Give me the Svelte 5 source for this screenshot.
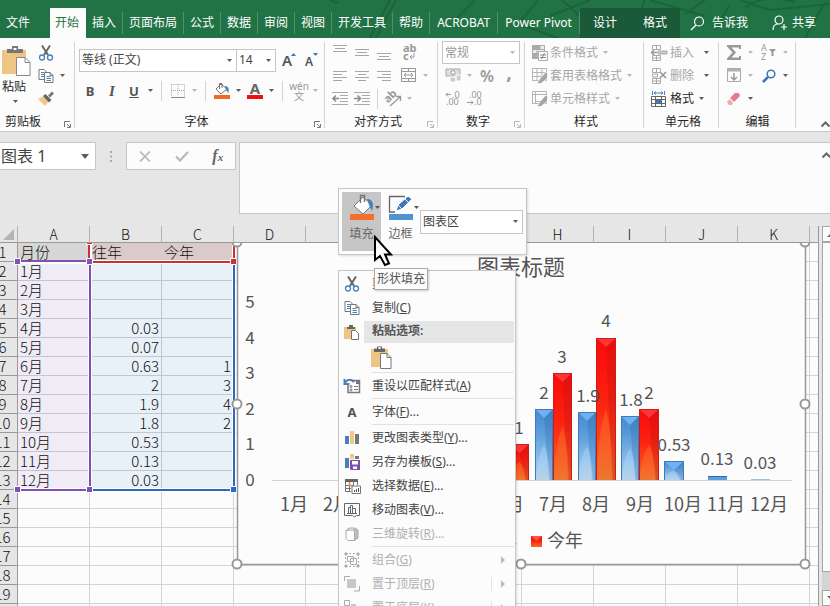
<script>
  const tabs = ['插入', '页面布局', '公式', '数据', '审阅', '视图', '开发工具', '帮助', 'ACROBAT', 'Power Pivot'];
  const columns = ['A', 'B', 'C', 'D', 'E', 'F', 'G', 'H', 'I', 'J', 'K', 'L'];
  const data = [
    ['月份', '往年', '今年'],
    ['1月', '', ''], ['2月', '', ''], ['3月', '', ''],
    ['4月', '0.03', ''], ['5月', '0.07', ''], ['6月', '0.63', '1'],
    ['7月', '2', '3'], ['8月', '1.9', '4'], ['9月', '1.8', '2'],
    ['10月', '0.53', ''], ['11月', '0.13', ''], ['12月', '0.03', '']
  ];
  const rows = Array.from({ length: 20 }, (_, i) => data[i] ?? ['', '', '']);
  const menu = [
    { icon: 'cut', text: '剪切', key: 'T', tail: '' },
    { icon: 'copy', text: '复制', key: 'C', tail: '' },
    { heading: '粘贴选项:' },
    { sep: true },
    { icon: 'reset', text: '重设以匹配样式', key: 'A', tail: '' },
    { sep: true },
    { icon: 'letter', text: '字体', key: 'F', tail: '...' },
    { sep: true },
    { icon: 'chart', text: '更改图表类型', key: 'Y', tail: '...' },
    { icon: 'template', text: '另存为模板', key: 'S', tail: '...' },
    { icon: 'select', text: '选择数据', key: 'E', tail: '...' },
    { icon: 'move', text: '移动图表', key: 'V', tail: '...' },
    { icon: 'cube', text: '三维旋转', key: 'R', tail: '...', off: true },
    { sep: true },
    { icon: 'group', text: '组合', key: 'G', tail: '', off: true, sub: true },
    { icon: 'front', text: '置于顶层', key: 'R', tail: '', off: true, sub: true, split: true },
    { icon: 'back', text: '置于底层', key: 'K', tail: '', off: true, sub: true, split: true }
  ];
  const bars = [
    { x: 492, w: 18, top: 457, c: 'blue' }, { x: 510, w: 19, top: 444, c: 'red' },
    { x: 535, w: 18, top: 409, c: 'blue' }, { x: 553, w: 19, top: 373, c: 'red' },
    { x: 578, w: 18, top: 412, c: 'blue' }, { x: 596, w: 20, top: 338, c: 'red' },
    { x: 621, w: 18, top: 416, c: 'blue' }, { x: 639, w: 20, top: 409, c: 'red' },
    { x: 664, w: 20, top: 461, c: 'blue' }
  ];
  const labels = [
    [519, 434, '1'], [544, 399, '2'], [562, 363, '3'], [588, 402, '1.9'], [606, 327, '4'],
    [631, 406, '1.8'], [649, 399, '2'], [674, 451, '0.53'], [717, 465, '0.13'], [760, 469, '0.03']
  ];
  const handles = [[237, 242], [521, 242], [805, 242], [237, 404], [805, 404], [237, 564], [521, 564], [805, 564]];
</script>

{#snippet caret(off = false)}
  <svg class="caret" width="5" height="3" viewBox="0 0 5 3"><path d="M0 0h5L2.5 3z" fill={off ? '#b8b8b8' : '#5c5c5c'} /></svg>
{/snippet}

{#snippet launcher(off = false)}
  <button class="launcher" aria-label="更多">
    <svg width="7" height="7" viewBox="0 0 7 7" fill="none" stroke={off ? '#b8b8b8' : '#777'}><path d="M.5 6V.5H6M3 3l3 3M6.500 3v3.500H3" /></svg>
  </button>
{/snippet}

{#snippet icon(name)}
  {#if name === 'cut'}
    <svg width="16" height="16" viewBox="0 0 16 16" fill="none"><path d="M4 0.500 L10 10M12 0.500 L6 10" stroke="#666" stroke-width="2" /><circle cx="4" cy="12.500" r="2.500" stroke="#4a7fb8" stroke-width="1.300" /><circle cx="12" cy="12.500" r="2.500" stroke="#4a7fb8" stroke-width="1.300" /></svg>
  {:else if name === 'copy'}
    <svg width="16" height="16" viewBox="0 0 16 16" fill="#fff" stroke="#777"><path d="M1 1.500h5l3 3v7H1z" /><path d="M3 4.500h3M3 6.500h3M3 8.500h3" stroke="#4a7fb8" /><path d="M6.500 4.500h5.500l3 3v7H6.500z" /><path d="M12 4.500v3h3" fill="none" /><path d="M8.500 8.500h4M8.500 10.500h4.500M8.500 12.500h4.500" stroke="#4a7fb8" /></svg>
  {:else if name === 'brush'}
    <svg width="18" height="16" viewBox="0 0 18 16"><path d="M1 8l6-3 5 5-4 5z" fill="#f0c88c" /><path d="M6 5l2.500-2 6 6L12 11.500z" fill="#666" /><path d="M11 4.500L15 .5l2 2-4 4z" fill="#777" /></svg>
  {:else if name === 'clipboard'}
    <svg width="22" height="24" viewBox="0 0 22 24"><path d="M1 4h17v18H1z" fill="#eec583" /><path d="M4 3.500h3v-2h5v2h3V7H4z" fill="#666" /><path d="M8.500 2h2v2h-2z" fill="#fff" /><path d="M10.500 8.500H17l4 4v11H10.500z" fill="#fff" stroke="#777" /><path d="M17 8.500v4h4" fill="none" stroke="#777" /></svg>
  {:else if name === 'reset'}
    <svg width="18" height="16" viewBox="0 0 18 16" fill="none"><path d="M9 2.500h7.500v12H5V7" stroke="#777" stroke-width="1.500" /><path d="M13 3h3v3h-3z" fill="#777" /><path d="M2 5c2-4 6-4 9-1M1.500 1v5h5" stroke="#4a7fb8" stroke-width="2" /><path d="M11 8.500h4M11 11.500h4" stroke="#777" /><circle cx="8" cy="8.500" r="1" stroke="#777" /><circle cx="8" cy="12" r="1" stroke="#777" /></svg>
  {:else if name === 'letter'}
    <b class="glyph">A</b>
  {:else if name === 'chart'}
    <svg width="16" height="16" viewBox="0 0 16 16"><path d="M1 6h4v8H1z" fill="#4a7fb8" /><path d="M6 1h4v13H6z" fill="#f0c88c" /><path d="M11 4h4v10h-4z" fill="#777" /></svg>
  {:else if name === 'template'}
    <svg width="16" height="16" viewBox="0 0 16 16"><path d="M1 4h4v10H1z" fill="#4a7fb8" /><path d="M6 0h4v5H6z" fill="#f0c88c" /><path d="M11 2h4v3h-4z" fill="#777" /><path d="M6 6h10v10H7l-1-1z" fill="#7b4fb0" /><path d="M8 7h6v3.500H8zM9 12.500h4v2.500H9z" fill="#fff" /></svg>
  {:else if name === 'select'}
    <svg width="17" height="16" viewBox="0 0 17 16" fill="none"><path d="M1 1h13v3H1z" fill="#666" /><path d="M1.500 4v9.500H7M5.500 4v9M9.500 4v3M13.500 4v3M1.500 7.500h8M1.500 10.500H7" stroke="#777" /><path d="M5.500 4v3.500h4" stroke="#ee8640" stroke-width="1.500" /><path d="M8 8h8.500v7.500H8z" fill="#fff" stroke="#777" /><path d="M10.500 14v-2M12.500 14V11M14.500 14v-4" stroke="#555" /></svg>
  {:else if name === 'move'}
    <svg width="16" height="16" viewBox="0 0 16 16" fill="none" stroke="#666"><path d="M.5 1.500h15v12h-3l-2 1.500-2-1.500h-8z" /><path d="M4.500 11.500v-6h2v6zM6.500 11.500V3.500h2v8zM8.500 11.500v-5h3v5zM3 11.500h10" /></svg>
  {:else if name === 'cube'}
    <svg width="16" height="16" viewBox="0 0 16 16" fill="none" stroke="#aaa"><path d="M2 4.500h8.500v10H4l-2-2z" fill="#fff" /><path d="M2 4.500L5 2h6l3 2v8l-3.500 2.500V4.500z" fill="#bdbdbd" /><path d="M3 4.500L6 2.500h4l-1 2z" fill="#ddd" stroke="none" /></svg>
  {:else if name === 'group'}
    <svg width="16" height="16" viewBox="0 0 16 16" fill="none" stroke="#aaa"><path d="M1 1h2v2H1zM13 1h2v2h-2zM1 13h2v2H1zM13 13h2v2h-2z" fill="#aaa" /><path d="M3.500 4.500h6v5h-6zM6.500 6.500h6v6h-6z" /><path d="M5 1.500h2M9 1.500h2M5 14.500h2M9 14.500h2M1.500 5v2M1.500 9v2M14.500 5v2M14.500 9v2" /></svg>
  {:else if name === 'front'}
    <svg width="16" height="16" viewBox="0 0 16 16" fill="none" stroke="#aaa"><path d="M.5 5V.5H6M15.500 10v5H10" /><path d="M3 3h9v9H3z" fill="#c8c8c8" stroke="none" /></svg>
  {:else if name === 'back'}
    <svg width="16" height="16" viewBox="0 0 16 16" fill="none" stroke="#aaa"><path d="M.5.5h5v5h-5zM10.500 10.500h5v5h-5z" /><path d="M7 4h5v6H7z" fill="#c8c8c8" stroke="none" /></svg>
  {:else if name === 'bucket'}
    <svg width="18" height="18" viewBox="0 0 18 18"><path d="M3 7l5-5 6 5-6 5z" fill="#fff" stroke="#777" /><path d="M6.500 7V1.500h2.500V6" fill="none" stroke="#777" /><path d="M12 4c4 0 4 4 3.500 7L13 8z" fill="#4a7fb8" /><path d="M1 13h16v4H1z" fill="#f0692a" /></svg>
  {:else if name === 'fontcolor'}
    <svg width="18" height="18" viewBox="0 0 18 18"><path d="M1 13h16v4H1z" fill="#f01010" /><text x="9" y="12" font-size="15" font-weight="700" fill="#666" text-anchor="middle">A</text></svg>
  {:else if name === 'borders'}
    <svg width="14" height="14" viewBox="0 0 14 14" fill="none" stroke="#aaa"><path d="M.5.5h13v12M.5.5v12M7 0v12M0 6.500h14" stroke-dasharray="1 1" /><path d="M0 13.500h14" stroke="#888" /></svg>
  {:else if name === 'merge'}
    <svg width="16" height="15" viewBox="0 0 16 15" fill="none" stroke="#999"><path d="M.5.5h14v13H.5zM.5 3.500h14M.5 10.500h14M7.500 0v4M7.500 11v3M3 7h9M5 5l-2 2 2 2M10 5l2 2-2 2" /></svg>
  {:else if name === 'wrap'}
    <svg width="14" height="18" viewBox="0 0 14 18"><text x="1" y="8" font-size="11" font-weight="700" fill="#999">ab</text><text x="1" y="16" font-size="11" font-weight="700" fill="#999">c</text><path d="M12 9v4H8M10 11l-2 2 2 2" fill="none" stroke="#999" /></svg>
  {:else if name === 'outdent' || name === 'indent'}
    <svg width="16" height="14" viewBox="0 0 16 14" fill="none" stroke="#aaa"><path d="M0 .5h16M8 3.500h8M8 6.500h8M8 9.500h8M0 12.500h16" /><path d={name === 'indent' ? 'M0 6.500h6M3.500 3.500l3 3-3 3' : 'M1 6.500h6M4 3.500l-3 3 3 3'} stroke="#888" stroke-width="1.500" /></svg>
  {:else if name === 'orient'}
    <svg width="17" height="16" viewBox="0 0 17 16"><text x="1" y="10" font-size="11" font-weight="700" fill="#999" transform="rotate(-45 5 9)">ab</text><path d="M5 15L15 6M11 5.500h4.500V10" fill="none" stroke="#999" stroke-width="1.300" /></svg>
  {:else if name === 'money'}
    <svg width="17" height="15" viewBox="0 0 17 15"><path d="M1 1h14v7H1z" fill="#ddd" stroke="#aaa" /><circle cx="8" cy="4.500" r="2" fill="#fff" stroke="#999" /><path d="M5 9h6v5H5zM11 7h5v6h-5z" fill="#ccc" stroke="#fff" /></svg>
  {:else if name === 'incdec' || name === 'decdec'}
    <svg width="16" height="15" viewBox="0 0 16 15" font-size="9" fill="#999"><text x={name === 'incdec' ? 7 : 2} y="7">{name === 'incdec' ? '.0' : '.00'}</text><text x={name === 'incdec' ? 1 : 7} y="14">{name === 'incdec' ? '.00' : '.0'}</text><path d={name === 'incdec' ? 'M1 3.500h5M3 1.500l-2 2 2 2' : 'M0 11.500h6M4 9.500l2 2-2 2'} fill="none" stroke="#999" /></svg>
  {:else if name === 'cond'}
    <svg width="16" height="16" viewBox="0 0 16 16" fill="#eee" stroke="#aaa"><path d="M.5.500h12v13H.5zM.5 4.500h12M.5 8.500h12M5 .5v13" /><path d="M1 1h7v3H1zM1 9h4v4H1z" fill="#aaa" /><path d="M6.500 6.500h9v9h-9z" fill="#fff" /><path d="M8 10h6M8 12.500h6M12.500 8l-3 6" stroke="#888" /></svg>
  {:else if name === 'tablefmt' || name === 'cellfmt'}
    <svg width="16" height="16" viewBox="0 0 16 16" fill="none" stroke="#b4b4b4"><path d="M.5.5h14v12H.5z" /><path d={name === 'tablefmt' ? 'M.5 4.500h14M.5 8.500h14M5 0v13M10 0v13' : 'M.5 3.500h14M3.500 0v13M3.500 10.500h8'} /><path d="M5 15.500l3-5 6-6.500 1.500 1v5L9 15.500z" fill="#a4a4a4" stroke="#fff" stroke-width=".7" /></svg>
  {:else if name === 'insert' || name === 'delete'}
    <svg width="17" height="16" viewBox="0 0 17 16" fill="none" stroke="#aaa"><path d="M1.500.5h8v4h-8zM5.500.5v4M1.500 10.500h8v5h-8zM5.500 10.500v5M1.500 13h8" />{#if name === 'insert'}<path d="M7 6h9v3H7z" fill="#ccc" /><path d="M0 7.500h6M3 5l-2.500 2.500L3 10" stroke="#999" stroke-width="1.500" />{:else}<path d="M1.500 6h5v3h-5z" /><path d="M9 4l6 6M15 4l-6 6" stroke="#999" stroke-width="1.700" />{/if}</svg>
  {:else if name === 'format'}
    <svg width="17" height="16" viewBox="0 0 17 16" fill="none"><path d="M1.500 0v4M13.500 0v4M3 2h9M5 .5L3 2l2 1.500M10 .5L12 2l-2 1.500" stroke="#4a7fb8" /><path d="M.5 5.500h14v10H.5zM.5 8.500h14M.5 12.500h14M4.500 5.500v10M10.500 5.500v10" stroke="#666" /><path d="M5 9h5v3H5z" fill="#3f78bb" /></svg>
  {:else if name === 'sum'}
    <svg width="15" height="15" viewBox="0 0 15 15"><path d="M0 0h14v4h-2V2.500H4.500L9 7.500 4.500 12.500H12V11h2v4H0v-1.500L5.500 7.500 0 1.500z" fill="#999" /></svg>
  {:else if name === 'sort'}
    <svg width="16" height="17" viewBox="0 0 16 17"><text x="0" y="7" font-size="9" fill="#999">A</text><text x="0" y="16" font-size="9" fill="#999">Z</text><path d="M8 5h7l-2.500 3v4h-2V8z" fill="#999" /></svg>
  {:else if name === 'filldown'}
    <svg width="15" height="15" viewBox="0 0 15 15" fill="none" stroke="#aaa"><path d="M.5.5h13v13H.5z" /><path d="M1 1h12v2H1z" fill="#bbb" /><path d="M7 5v7M4 9l3 3 3-3" stroke="#999" stroke-width="1.500" /></svg>
  {:else if name === 'find'}
    <svg width="15" height="14" viewBox="0 0 15 14" fill="none" stroke="#3f73b5"><circle cx="9" cy="5" r="3.800" stroke-width="1.500" /><path d="M6 8l-5 5" stroke-width="2.500" /></svg>
  {:else if name === 'eraser'}
    <svg width="14" height="14" viewBox="0 0 14 14"><path d="M8 1h4l1 3-6 6-4-4z" fill="#e57a90" /><path d="M2.500 7l3.500 4-1.500 2H2l-2-3z" fill="#f0a5b2" /></svg>
  {/if}
{/snippet}

{#snippet lines(list)}
  <button class="tool" aria-label="对齐">
    <svg width="15" height="16" viewBox="0 0 15 16" stroke="#a6a6a6">
      {#each list as [x1, x2, y]}<path d="M{x1} {y}.5H{x2}" />{/each}
    </svg>
  </button>
{/snippet}

{#snippet tool(name, label)}
  <button class="tool" aria-label={label}>{@render icon(name)}</button>
{/snippet}

<div class="app">
  <header>
    <svg class="deco" width="530" height="38" viewBox="0 0 530 38" fill="none" stroke="#1c633c" stroke-width="2" aria-hidden="true">
      <path d="M30 0l8 3M70 38L90 0M76 38L96 0M155 20L175 0M238 0l-20 24 40 14M262 0l22 20 6 18M310 24l18 14M250 16l40-16M345 0l-8 20M385 14l20-14M445 8c12-10 30-12 50-6M440 0l30 10 60-6M415 30l14-24M505 38l20-36M350 0l55 16" />
    </svg>
    <nav>
      <a href="#file" class="file">文件</a>
      <a href="#home" class="active">开始</a>
      {#each tabs as t}<a href="#tab" class="tab" class:latin={t > 'A' && t < 'Z'}><span>{t}</span></a>{/each}
      <a href="#design" class="ctx">设计</a>
      <a href="#format" class="ctx">格式</a>
    </nav>
    <button class="tell">
      <svg width="15" height="15" viewBox="0 0 15 15" fill="none" stroke="#fff" stroke-width="1.200"><circle cx="9" cy="5.500" r="4.500" /><path d="M6 9l-5 5" /></svg>
      <span>告诉我</span>
    </button>
    <button class="share">
      <svg width="16" height="16" viewBox="0 0 16 16" fill="none" stroke="#fff" stroke-width="1.200"><circle cx="7" cy="5" r="4" /><path d="M1 15c0-4 2-6 5-6M12 9v6M9 12h6" /></svg>
      <span>共享</span>
    </button>
  </header>

  <section class="ribbon">
    <div class="group clip">
      <div class="body cols">
        <button class="paste">
          <svg width="30" height="32" viewBox="0 0 30 32"><path d="M1 5h24v24H1z" fill="#eec583" /><path d="M6 4h5V1h6v3h5v4H6z" fill="#777" /><path d="M12.500 3h3v2h-3z" fill="#fff" /><path d="M15.500 12.500H24l5 5v13H15.500z" fill="#fff" stroke="#888" /><path d="M24 12.500v5h5" fill="none" stroke="#888" /></svg>
          <span>粘贴</span>
          {@render caret()}
        </button>
        <div class="stack">
          <div class="row">{@render tool('cut', '剪切')}</div>
          <div class="row">{@render tool('copy', '复制')}{@render caret()}</div>
          <div class="row">{@render tool('brush', '格式刷')}</div>
        </div>
      </div>
      <footer><span>剪贴板</span>{@render launcher()}</footer>
    </div>

    <div class="group font">
      <div class="body">
        <div class="row tall">
          <label class="sel wide"><select aria-label="字体"><option>等线 (正文)</option></select>{@render caret()}</label>
          <label class="sel size"><select aria-label="字号"><option>14</option></select>{@render caret()}</label>
          <button class="tool" aria-label="增大字号"><svg width="16" height="18" viewBox="0 0 16 18"><text x="2" y="15" font-size="15" font-weight="600" fill="#555">A</text><path d="M11 5h5l-2.500-3z" fill="#3f73b5" /></svg></button>
          <button class="tool" aria-label="减小字号"><svg width="16" height="18" viewBox="0 0 16 18"><text x="2" y="15" font-size="12" font-weight="600" fill="#555">A</text><path d="M10 2h5l-2.500 3z" fill="#3f73b5" /></svg></button>
        </div>
        <div class="row fmt">
          <button class="tool"><b>B</b></button>
          <button class="tool"><i>I</i></button>
          <button class="tool"><u>U</u></button>
          {@render caret()}<span class="bar"></span>
          {@render tool('borders', '边框')}{@render caret(true)}<span class="bar"></span>
          {@render tool('bucket', '填充颜色')}{@render caret()}
          <span class="gap"></span>
          {@render tool('fontcolor', '字体颜色')}{@render caret()}<span class="bar"></span>
          <button class="pinyin"><span>wén</span><span>文</span></button>{@render caret(true)}
        </div>
      </div>
      <footer><span>字体</span>{@render launcher()}</footer>
    </div>

    <div class="group align">
      <div class="body">
        <div class="row">
          {@render lines([[0, 14, 0], [2, 12, 3], [0, 14, 6]])}
          {@render lines([[0, 14, 4], [2, 12, 7], [0, 14, 10]])}
          {@render lines([[0, 14, 8], [2, 12, 11], [0, 14, 14]])}
          <span class="gap"></span>{@render tool('wrap', '自动换行')}
        </div>
        <div class="row">
          {@render lines([[0, 14, 3], [0, 9, 6], [0, 14, 9], [0, 9, 12]])}
          {@render lines([[0, 14, 3], [3, 11, 6], [0, 14, 9], [3, 11, 12]])}
          {@render lines([[0, 14, 3], [5, 14, 6], [0, 14, 9], [5, 14, 12]])}
          <span class="gap"></span>{@render tool('merge', '合并')}{@render caret(true)}
        </div>
        <div class="row">
          {@render tool('outdent', '减少缩进')}{@render tool('indent', '增加缩进')}
          <span class="bar"></span>{@render tool('orient', '方向')}{@render caret(true)}
        </div>
      </div>
      <footer><span>对齐方式</span>{@render launcher(true)}</footer>
    </div>

    <div class="group number">
      <div class="body">
        <div class="row"><label class="sel num"><select aria-label="数字格式"><option>常规</option></select>{@render caret(true)}</label></div>
        <div class="row">
          {@render tool('money', '会计格式')}{@render caret(true)}
          <button class="tool pct">%</button><button class="tool comma">,</button>
        </div>
        <div class="row">{@render tool('incdec', '增加小数位')}{@render tool('decdec', '减少小数位')}</div>
      </div>
      <footer><span>数字</span>{@render launcher(true)}</footer>
    </div>

    <div class="group styles">
      <div class="body">
        <button class="row text off">{@render icon('cond')}<span>条件格式</span>{@render caret(true)}</button>
        <button class="row text off">{@render icon('tablefmt')}<span>套用表格格式</span>{@render caret(true)}</button>
        <button class="row text off">{@render icon('cellfmt')}<span>单元格样式</span>{@render caret(true)}</button>
      </div>
      <footer><span>样式</span></footer>
    </div>

    <div class="group cells">
      <div class="body">
        <button class="row text off apart">{@render icon('insert')}<span>插入</span>{@render caret()}</button>
        <button class="row text off apart">{@render icon('delete')}<span>删除</span>{@render caret()}</button>
        <button class="row text">{@render icon('format')}<span>格式</span>{@render caret()}</button>
      </div>
      <footer><span>单元格</span></footer>
    </div>

    <div class="group edit">
      <div class="body">
        <div class="row">{@render tool('sum', '求和')}{@render caret(true)}<span class="gap"></span>{@render tool('sort', '排序')}{@render caret(true)}</div>
        <div class="row">{@render tool('filldown', '填充')}{@render caret(true)}<span class="gap"></span>{@render tool('find', '查找')}{@render caret()}</div>
        <div class="row">{@render tool('eraser', '清除')}{@render caret()}</div>
      </div>
      <footer><span>编辑</span></footer>
    </div>

    <button class="fold" aria-label="折叠功能区"><svg width="9" height="6" viewBox="0 0 9 6" fill="none" stroke="#666" stroke-width="2"><path d="M.5 5.500l4-4 4 4" /></svg></button>
  </section>

  <section class="formula">
    <label class="sel name"><select aria-label="名称框"><option>图表 1</option></select>{@render caret()}</label>
    <svg class="dots" width="2" height="11" viewBox="0 0 2 11" fill="#aaa"><path d="M0 0h2v2H0zM0 4.500h2v2H0zM0 9h2v2H0z" /></svg>
    <div class="fx">
      <button aria-label="取消"><svg width="12" height="11" viewBox="0 0 12 11" stroke="#b8b8b8" stroke-width="1.700"><path d="M1 .5l10 10M11 .5l-10 10" /></svg></button>
      <button aria-label="输入"><svg width="14" height="11" viewBox="0 0 14 11" fill="none" stroke="#b8b8b8" stroke-width="2.200"><path d="M1 5.500l4 4L13 1" /></svg></button>
      <button class="fn"><i>f</i><small>x</small></button>
    </div>
    <div class="entry">
      <textarea aria-label="编辑栏"></textarea>
      <button aria-label="折叠编辑栏"><svg width="9" height="6" viewBox="0 0 9 6" fill="none" stroke="#666" stroke-width="2"><path d="M.5 5.500l4-4 4 4" /></svg></button>
    </div>
  </section>

  <main>
    <div class="sheet">
      <table>
        <thead>
          <tr>
            <th class="corner"><svg width="11" height="11" viewBox="0 0 11 11"><path d="M11 0v11H0z" fill="#b4b4b4" /></svg></th>
            {#each columns as c}<th>{c}</th>{/each}
          </tr>
        </thead>
        <tbody>
          {#each rows as r, i}
            <tr class:first={i === 0} class:filled={i > 0 && i < 13}>
              <th>{i + 1}</th>
              {#each columns as _, j}<td class:value={i > 0 && j > 0}>{r[j] ?? ''}</td>{/each}
            </tr>
          {/each}
        </tbody>
      </table>

      <svg class="ranges" width="240" height="252" viewBox="0 243 240 252" fill="none" aria-hidden="true">
        <g stroke="#fff" stroke-width="4"><path d="M90 243V489M234 243V489M18 490H234M18 262H234" /></g>
        <g stroke-width="2">
          <path d="M89 243v18M234 243v18M90 262H234" stroke="#c83232" />
          <path d="M17 261H89M90 262V489M17 490H89" stroke="#8050b4" />
          <path d="M234 263V489M92 490H233" stroke="#2f68c4" />
        </g>
        <g stroke="#fff">
          <path d="M14.500 258.500h6v6h-6zM86.500 258.500h6v6h-6zM86.500 486.500h6v6h-6zM14.500 486.500h6v6h-6z" fill="#8050b4" />
          <path d="M230.500 258.500h6v6h-6zM86.500 238.500h6v6h-6z" fill="#c83232" />
          <path d="M230.500 486.500h6v6h-6z" fill="#2f68c4" />
        </g>
      </svg>

      <svg class="chart" width="585" height="330" viewBox="229 243 585 330" role="img" aria-label="图表标题">
        <defs>
          <linearGradient id="blue" x1="0" y1="0" x2="0" y2="1"><stop offset="0" stop-color="#438ace" /><stop offset=".3" stop-color="#5a9bd8" /><stop offset=".75" stop-color="#8fc2ee" /><stop offset="1" stop-color="#b4cbe2" /></linearGradient>
          <linearGradient id="red" x1="0" y1="0" x2="0" y2="1"><stop offset="0" stop-color="#fb0a0a" /><stop offset=".45" stop-color="#fb2210" /><stop offset=".8" stop-color="#f85020" /><stop offset="1" stop-color="#e8702c" /></linearGradient>
        </defs>
        <rect x="237.500" y="240.500" width="568" height="324" fill="#fcfcfc" stroke="#999" stroke-width="1.500" />
        <text x="521" y="275" font-size="22" text-anchor="middle">图表标题</text>
        <path d="M272 480.500H792" stroke="#d4d4d4" />
        {#each bars as b}
          <g>
            <rect x={b.x} y={b.top} width={b.w} height={480 - b.top} fill="url(#{b.c})" />
            <path d="M{b.x + b.w / 2} {b.top + 9}L{b.x + b.w} {b.top}V480H{b.x + b.w - 4}z" fill={b.c === 'blue' ? '#2c6dac' : '#b81414'} opacity=".3" />
            <path d="M{b.x + 1} 480Q{b.x + 2} {(b.top + 960) / 3} {b.x + b.w / 2} {(b.top + 480) / 2}Q{b.x + b.w - 4} {(b.top + 960) / 3} {b.x + b.w - 3} 480z" fill={b.c === 'blue' ? '#c4e0f8' : '#f88434'} opacity=".35" />
            <path d="M{b.x} {b.top}h{b.w}l{-b.w / 2} 9z" fill={b.c === 'blue' ? '#6fb1f2' : '#ff3636'} />
            <path d="M{b.x + 0.5} 480V{b.top + 0.5}h{b.w - 1}V480" fill="none" stroke={b.c === 'blue' ? '#3a7cbc' : '#cc1c1c'} />
          </g>
        {/each}
        <path d="M708 476h19v4h-19z" fill="#5b9ee0" /><path d="M708 476.500h19" stroke="#2f6ba5" /><path d="M751 479.500h19" stroke="#9cc4e6" />
        {#each [0, 1, 2, 3, 4, 5] as v}<text x="250" y={486 - Math.round(v * 35.6)} font-size="17" text-anchor="middle">{v}</text>{/each}
        {#each Array.from({ length: 12 }, (_, i) => i) as m}<text x={Math.round(294 + m * 43.2)} y="511" font-size="18" text-anchor="middle">{m + 1}月</text>{/each}
        {#each labels as [x, y, t]}<text {x} {y} font-size="17" text-anchor="middle">{t}</text>{/each}
        <rect x="466" y="536" width="11" height="11" fill="url(#blue)" />
        <text x="481" y="547" font-size="18">往年</text>
        <rect x="531" y="536" width="11" height="11" fill="url(#red)" /><path d="M531 536h11l-5.500 5z" fill="#ff5040" />
        <text x="547" y="547" font-size="18">今年</text>
        {#each handles as [cx, cy]}<circle {cx} {cy} r="4.500" fill="#fff" stroke="#999" stroke-width="2" />{/each}
      </svg>
    </div>
    <div class="scroll">
      <button aria-label="向上"><svg width="8" height="5" viewBox="0 0 8 5"><path d="M0 5l4-4 4 4z" fill="#666" /></svg></button>
      <div class="thumb"></div>
      <div class="track"></div>
      <button aria-label="向下"><svg width="8" height="5" viewBox="0 0 8 5"><path d="M0 0h8l-4 4z" fill="#666" /></svg></button>
    </div>
  </main>

  <div class="mini">
    <button class="big on">
      <svg width="34" height="28" viewBox="0 0 34 28"><path d="M8 13l9-9 9 8-9 9z" fill="#fff" stroke="#777" /><path d="M14.500 10V2.500h4V9" fill="none" stroke="#777" stroke-width="1.500" /><path d="M21 6c6 0 7 5 5 12l-3-6z" fill="#4a7fb8" /><path d="M4 21h24v6H4z" fill="#f4702c" /><path d="M29 13h5l-2.500 3z" fill="#555" /></svg>
      <span>填充</span>
    </button>
    <button class="big">
      <svg width="34" height="28" viewBox="0 0 34 28"><path d="M20 3.500H4.500V19H10" fill="none" stroke="#666" stroke-width="1.300" /><path d="M11 18l2-6 10-9 4 3-10 10z" fill="#3f78bb" stroke="#fff" /><path d="M20 6l4 4M13 12l4 4" stroke="#fff" /><path d="M4 21h24v6H4z" fill="#4f93d0" /><path d="M29 13h5l-2.500 3z" fill="#555" /></svg>
      <span>边框</span>
    </button>
    <label class="sel area"><select aria-label="图表元素"><option>图表区</option></select>{@render caret()}</label>
  </div>

  <div class="menu" role="menu">
    {#each menu as m}
      {#if m.sep}
        <hr />
      {:else if m.heading}
        <div class="heading"><span class="ico"><svg width="16" height="16" viewBox="0 0 16 16"><path d="M0 3h12v12H0z" fill="#eec583" /><path d="M3 3h2V1h4v2h2v2H3z" fill="#666" /><path d="M7.500 6.500h4l3 3v6h-7z" fill="#fff" stroke="#777" /></svg></span><strong>{m.heading}</strong></div>
        <button class="option" aria-label="粘贴">{@render icon('clipboard')}</button>
      {:else}
        <button class="item" class:off={m.off} role="menuitem">
          <span class="ico">{@render icon(m.icon)}</span>
          <span>{m.text}(<u>{m.key}</u>){m.tail}</span>
          {#if m.sub}<span class="sub" class:split={m.split}><svg width="4" height="8" viewBox="0 0 4 8"><path d="M0 0l4 4-4 4z" fill="#bbb" /></svg></span>{/if}
        </button>
      {/if}
    {/each}
  </div>

  <div class="tip" role="tooltip">形状填充</div>
  <svg class="pointer" width="20" height="34" viewBox="0 0 20 34" aria-hidden="true"><path d="M2 2v23l5-4 5 9 4-1.500-4-9h6z" fill="#fff" stroke="#000" stroke-width="2" /></svg>
</div>

<style>
  :global(body) { margin: 0; }
  .app {
    position: relative; display: flex; flex-direction: column; height: 100vh; overflow: hidden;
    font: 12px/16px "Noto Sans", "Noto Sans CJK SC", sans-serif; color: #262626; background: #e6e6e6;
  }
  .app * { box-sizing: border-box; }
  button { padding: 0; border: 0; background: none; font: inherit; color: inherit; }
  a { color: inherit; text-decoration: none; }
  svg { display: block; flex: none; }
  .ribbon svg { overflow: visible; }

  header { position: relative; display: flex; height: 38px; flex: none; padding-top: 8px; background: #217346; color: #fff; overflow: hidden; }
  .deco { position: absolute; right: 0; top: 0; }
  nav { position: relative; display: flex; white-space: nowrap; }
  nav a { display: flex; align-items: center; padding: 0 6px; }
  .file { width: 50px; }
  .active { width: 36px; padding: 0 5px; background: #fcfcfc; color: #217346; }
  nav .tab { padding: 0; }
  .tab span { padding: 3px 6px; border-right: 1px solid #4d9069; }
  .latin span { padding: 3px 7px; }
  nav .ctx { width: 50px; justify-content: center; background: #1a5a38; }
  .tell, .share { position: relative; display: flex; align-items: center; gap: 7px; color: #fff; white-space: nowrap; }
  .tell { margin-left: 10px; }
  .share { gap: 4px; margin: 0 14px 0 auto; }

  .ribbon { display: flex; height: 94px; flex: none; padding: 3px 0 0; background: #fcfcfc; border-bottom: 1px solid #c8c8c8; }
  .group { position: relative; display: flex; flex-direction: column; flex: none; height: 86px; margin-top: 1px; border-right: 1px solid #d4d4d4; }
  .body { display: flex; flex-direction: column; flex: none; height: 70px; margin-top: -1px; }
  .body.cols { flex-direction: row; }
  .row { display: flex; align-items: center; height: 23px; flex: none; }
  .row.tall { height: 38px; }
  .group footer { display: flex; align-items: center; flex: none; height: 22px; padding-right: 3px; }
  .group footer span { flex: 1; text-align: center; }
  .launcher { margin-top: 4px; }
  .tool { display: flex; align-items: center; justify-content: center; width: 22px; height: 22px; }
  .bar { width: 1px; height: 20px; margin: 0 5px 0 8px; background: #d4d4d4; }
  .gap { width: 3px; }
  .caret { margin-left: 3px; }
  .clip { width: 75px; }
  .clip footer span { flex: none; padding-left: 5px; }
  .clip footer .launcher { margin-left: auto; }
  .paste { display: flex; flex-direction: column; align-items: center; gap: 2px; width: 32px; padding-top: 4px; white-space: nowrap; }
  .paste span { margin-left: -4px; line-height: 16px; }
  .paste .caret { margin: 3px 2px 0 0; }
  .stack { padding-left: 3px; }
  .font { width: 250px; padding-left: 4px; }
  .font .row.tall { gap: 1px; }
  .fmt .tool b, .fmt .tool i, .fmt .tool u { font-size: 13px; font-weight: 700; color: #555; }
  .fmt .tool i { font-family: "Liberation Serif", serif; font-size: 15px; }
  .pinyin { display: flex; flex-direction: column; width: 22px; align-items: center; font-size: 10px; line-height: 10px; color: #999; }
  .align { width: 113px; padding-left: 4px; }
  .align .bar { margin: 0 4px; }
  .number { width: 87px; padding-left: 4px; }
  .pct, .comma { color: #999; font-size: 16px; font-weight: 600; }
  .pct { margin-left: 4px; }
  .comma { padding-bottom: 8px; font-size: 20px; font-weight: 700; }
  .styles { width: 119px; padding-left: 7px; }
  .cells { width: 75px; padding-left: 7px; }
  .text { gap: 2px; white-space: nowrap; }
  .text.off { color: #a6a6a6; }
  .apart .caret { margin-left: 8px; }
  .edit { width: 77px; padding-left: 4px; }
  .edit .gap { width: 5px; }
  .fold { margin: auto 0 4px auto; }

  .sel { display: grid; align-items: center; border: 1px solid #c6c6c6; background: #fff; }
  .sel select { grid-area: 1 / 1; width: 100%; height: 100%; padding: 0 2px; border: 0; background: none; appearance: none; font: inherit; color: #444; }
  .sel .caret { grid-area: 1 / 1; justify-self: end; margin: 0 4px 0 0; pointer-events: none; }
  .wide { width: 158px; height: 23px; }
  .size { width: 40px; height: 23px; margin-left: -2px; }
  .num { width: 78px; height: 23px; }
  .num select { color: #999; }

  .formula { display: flex; flex: none; align-items: flex-start; height: 94px; padding-top: 10px; }
  .name { width: 96px; height: 28px; border-left: 0; font-size: 16px; }
  .name select { padding-left: 1px; }
  .name .caret { width: 8px; height: 5px; margin-right: 6px; }
  .dots { margin: 9px 14px 0; }
  .fx { display: flex; justify-content: space-around; width: 110px; height: 28px; border: 1px solid #c6c6c6; background: #fcfcfc; }
  .fn { font-family: "Liberation Serif", serif; font-size: 16px; font-weight: 700; color: #666; }
  .fn small { font-size: 11px; font-style: italic; }
  .entry { display: flex; flex: 1; align-items: flex-start; height: 72px; margin-left: 3px; border: 1px solid #c6c6c6; border-right: 0; background: #fcfcfc; }
  .entry textarea { flex: 1; height: 100%; border: 0; background: none; resize: none; font: inherit; }
  .entry button { margin-top: 9px; margin-right: -1px; }

  main { display: flex; flex: 1; min-height: 0; }
  .sheet { position: relative; flex: 1; min-width: 0; overflow: hidden; font: 15px/18px "Noto Sans CJK SC", sans-serif; color: #111; }
  table { width: max-content; margin-left: -12px; border-collapse: separate; border-spacing: 0; table-layout: fixed; }
  th, td { height: 19px; width: 72px; min-width: 72px; padding: 0 2px; border: solid #d4d4d4; border-width: 0 1px 1px 0; line-height: 18px; font-weight: 300; white-space: nowrap; text-align: left; }
  td { background: #fcfcfc; }
  th { background: #e6e6e6; text-align: center; border-color: #999; }
  th:first-child { width: 30px; min-width: 30px; padding: 0; }
  thead th { height: 17px; line-height: 16px; font-size: 14px; border-right-color: #b4b4b4; }
  .corner svg { margin: 3px 3px 2px auto; }
  .value { text-align: right; }
  .first td:nth-child(2) { background: #d6d6d6; }
  .first td:nth-child(3), .first td:nth-child(4) { background: #dacaca; border-right-color: #dacaca; }
  .filled td:nth-child(2) { background: #f0ecf6; border-color: #c6c4d2; }
  .filled td:nth-child(3), .filled td:nth-child(4) { background: #e8f0f8; border-color: #c0c6d2; }
  .ranges { position: absolute; left: 0; top: 17px; }
  .chart { position: absolute; left: 229px; top: 17px; fill: #555; }

  .scroll { display: flex; flex-direction: column; flex: none; width: 12px; padding-left: 3px; border-left: 1px solid #999; overflow: hidden; }
  .scroll button, .thumb { width: 17px; flex: none; border: 1px solid #a6a6a6; background: #fcfcfc; }
  .scroll button { display: flex; align-items: center; justify-content: center; height: 16px; }
  .scroll .thumb { flex: 1; }
  .track { height: 18px; background: #d4d4d4; }

  .mini { position: absolute; left: 338px; top: 188px; display: flex; align-items: center; width: 189px; height: 67px; padding: 3px; border: 1px solid #c6c6c6; background: #fcfcfc; box-shadow: 1px 1px 2px #0002; }
  .big { display: flex; flex-direction: column; align-items: center; width: 39px; height: 59px; padding-top: 1px; color: #666; gap: 5px; }
  .big svg { margin-left: 2px; }
  .on { background: #c6c6c6; }
  .area { flex: 1; height: 24px; }

  .menu { position: absolute; left: 338px; top: 270px; width: 178px; padding: 1px 1px 3px; border: 1px solid #c6c6c6; background: #fcfcfc; box-shadow: 1px 1px 2px #0002; color: #444; }
  .item { display: flex; align-items: center; width: 100%; height: 24px; white-space: nowrap; }
  .item.off { color: #b0b0b0; }
  .ico { display: flex; justify-content: center; align-items: center; width: 24px; flex: none; }
  .item .ico { margin-right: 8px; }
  .glyph { font-size: 13px; color: #555; }
  .heading { display: flex; height: 24px; padding: 1px 0; }
  .heading strong { flex: 1; padding-left: 8px; background: #e6e6e6; font-weight: 600; line-height: 20px; color: #555; }
  .option { display: flex; width: 100%; height: 28px; padding: 1px 0 0 30px; }
  .menu hr { height: 1px; margin: 0 0 1px 32px; border: 0; background: #e2e2e2; }
  .sub { margin-left: auto; padding: 3px 9px; }
  .split { border-left: 1px solid #e2e2e2; }

  .tip { position: absolute; left: 374px; top: 268px; padding: 2px; border: 1px solid #aaa; background: #fcfcfc; color: #555; box-shadow: 1px 1px 2px #0003; }
  .pointer { position: absolute; left: 373px; top: 235px; }
</style>
